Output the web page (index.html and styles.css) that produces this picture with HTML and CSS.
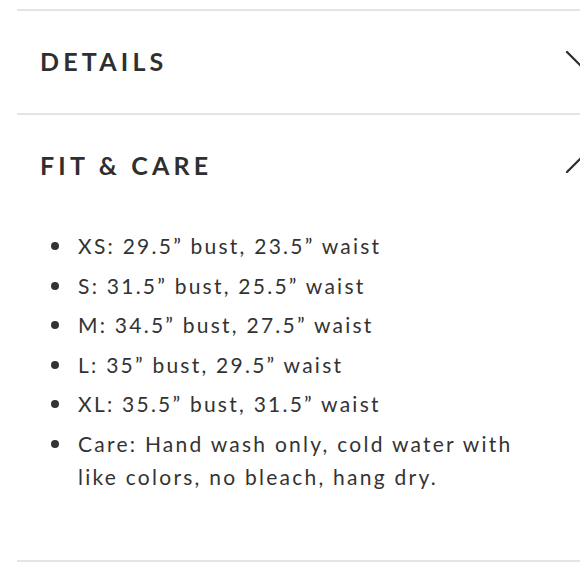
FILE: index.html
```html
<!DOCTYPE html>
<html>
<head>
<meta charset="utf-8">
<link rel="stylesheet" href="styles.css">
</head>
<body>
<div class="accordion">
  <section class="item">
    <div class="header">
      <h2 class="title">DETAILS</h2>
      <svg class="chev" width="40" height="24" viewBox="0 0 40 24"><polyline points="2,2 18,18 34,2" fill="none" stroke="#2b2b2b" stroke-width="2.2" stroke-linecap="round"/></svg>
    </div>
  </section>
  <section class="item open">
    <div class="header">
      <h2 class="title">FIT &amp; CARE</h2>
      <svg class="chev" width="40" height="24" viewBox="0 0 40 24"><polyline points="2,18 18,2 34,18" fill="none" stroke="#2b2b2b" stroke-width="2.2" stroke-linecap="round"/></svg>
    </div>
    <ul class="list">
      <li>XS: 29.5” bust, 23.5” waist</li>
      <li>S: 31.5” bust, 25.5” waist</li>
      <li>M: 34.5” bust, 27.5” waist</li>
      <li>L: 35” bust, 29.5” waist</li>
      <li>XL: 35.5” bust, 31.5” waist</li>
      <li>Care: Hand wash only, cold water with like colors, no bleach, hang dry.</li>
    </ul>
  </section>
</div>
</body>
</html>
```
FILE: styles.css
```css
html, body {
  margin: 0;
  padding: 0;
  background: #ffffff;
  overflow: hidden;
  width: 580px;
  height: 580px;
}
body {
  font-family: Lato, "Open Sans", sans-serif;
  color: #333333;
}
.accordion {
  margin-left: 17px;
  margin-top: 9px;
  width: 610px;
}
.item {
  border-top: 2px solid #e4e4e4;
}
.item.open {
  border-bottom: 2px solid #e4e4e4;
  padding-bottom: 61px;
}
.header {
  box-sizing: border-box;
  display: flex;
  align-items: center;
  justify-content: space-between;
  height: 102px;
  padding-left: 23px;
  padding-bottom: 2px;
}
.title {
  margin: 0;
  font-size: 25px;
  font-weight: 700;
  letter-spacing: 4.2px;
  color: #2f2f2f;
  line-height: 1;
}
.chev {
  margin-right: 22px;
  margin-top: 2px;
}
.list {
  margin: 12px 0 0 0;
  padding: 0 0 0 61px;
  width: 460px;
  list-style: none;
  font-size: 21px;
  line-height: 33px;
  letter-spacing: 2.25px;
  color: #333333;
}
.list li {
  position: relative;
  margin-bottom: 6.5px;
}
.list li::before {
  content: "";
  position: absolute;
  left: -27px;
  top: 13px;
  width: 8px;
  height: 8px;
  border-radius: 50%;
  background: #333333;
}
```
